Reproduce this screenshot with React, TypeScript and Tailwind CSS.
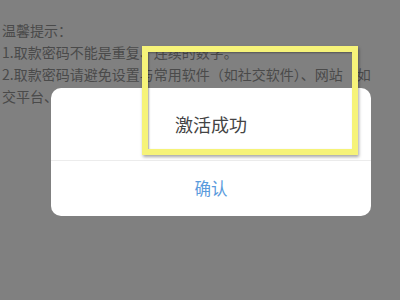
import React from 'react';

const font = { fontFamily: '"Noto Sans CJK SC", "Noto Sans", sans-serif' };

function App() {
  return (
    <div className="relative w-[400px] h-[300px] overflow-hidden bg-[#808080]" style={font}>
      {/* page content under the mask */}
      <div className="pt-[19px] pl-[2px] text-[14px] leading-[22px] text-[#4a4a4a] whitespace-nowrap">
        <p>温馨提示：</p>
        <p>1.取款密码不能是重复、连续的数字。</p>
        <p>2.取款密码请避免设置与常用软件（如社交软件）、网站（如</p>
        <p>交平台、银行卡等）的密码相同，以保障账户安全。</p>
      </div>

      {/* dialog */}
      <div className="absolute left-[51px] top-[88px] w-[320px] rounded-[10px] bg-white">
        <div className="h-[72px] flex items-center justify-center text-[18px] text-[#444]">
          激活成功
        </div>
        <div className="h-px bg-[#ececec]" />
        <div className="h-[55px] flex items-center justify-center text-[16.5px] text-[#5b9bdc]">
          确认
        </div>
      </div>

      {/* highlight frame */}
      <div className="absolute left-[142px] top-[46px] w-[216px] h-[109px] border-[6px] border-[#f6f379] shadow-[1px_2px_3px_rgba(0,0,0,0.35),inset_1px_1px_2px_rgba(0,0,0,0.35)]" />
    </div>
  );
}

export default App;
